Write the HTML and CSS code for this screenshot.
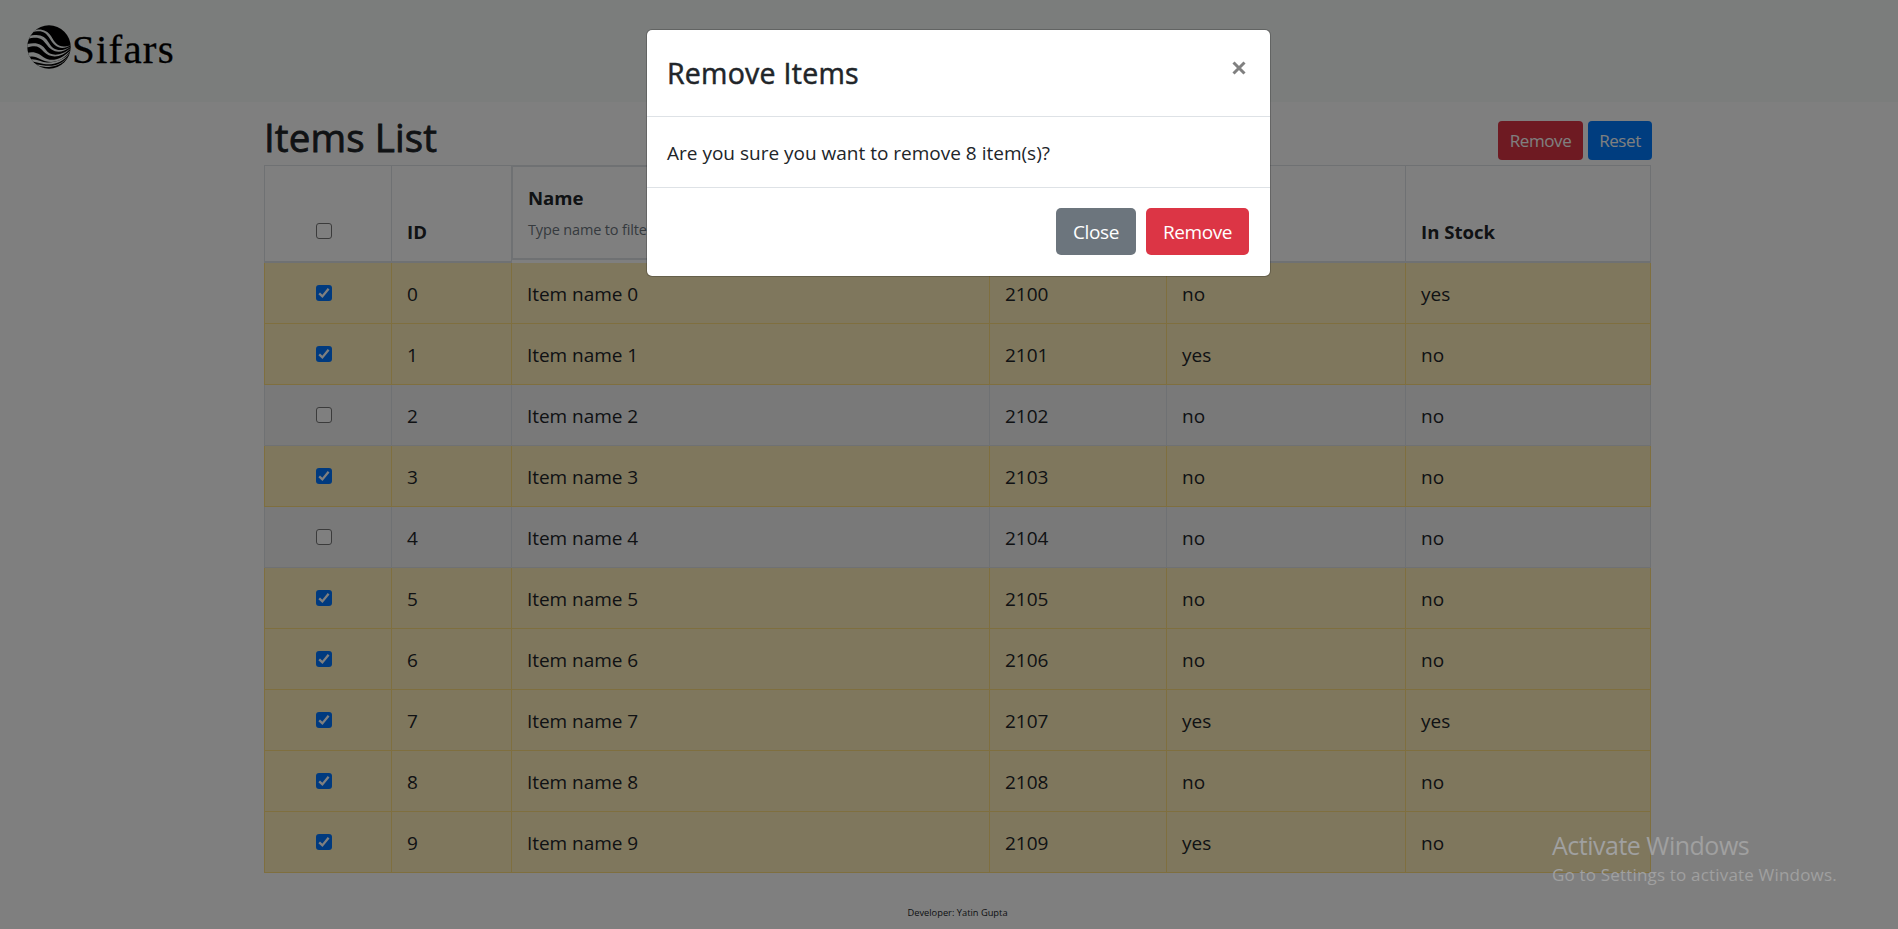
FILE: index.html
```html
<!DOCTYPE html>
<html lang="en"><head><meta charset="utf-8"><title>Items List</title><link rel="stylesheet" href="styles.css"></head>
<body>
<header class="navbar">
<svg class="mark" viewBox="0 0 44 44"><defs><clipPath id="disc"><circle cx="22" cy="22" r="21.7"/></clipPath></defs><g clip-path="url(#disc)"><rect width="44" height="44"/><g class="stripes"><path d="M4 5.5C14 3 20 5 24 11C29 20 33 24 44 20C34 26 28 22 23 14C18 6 14 5 4 7.5Z"/><path d="M1 11.5C12 8 18 11 22 18C26 25 33 28 44 21.5C33 30 25 27 20 20C15 13 11 11 0 14Z"/><path d="M0 19C10 17 15 19 19 25C23 31 33 32 44 23C34 34 23 33 17 27C12 21 9 20 0 22.5Z"/><path d="M0 28C8 26 12 29 17 32.5C24 37 34 35 44 25C35 38 23 39 14 34.5C8 31 6 31 0 32Z"/><path d="M2 34.5C9 33 14 37 20 37.5C29 38 37 34 43 28C35 39 25 40 17 39C12 38 8 36.5 3 36.5Z"/><path d="M6 39.5C14 39 18 41.5 25 40.7C33 39.5 37 36 41 32C35 40 27 42 19 42C13 41.5 11 40.5 7 41Z"/></g></g></svg><span class="brand">Sifars</span>
</header>
<main class="container">
<div class="heading"><h2>Items List</h2><div class="actions"><button class="btn danger">Remove</button><button class="btn primary">Reset</button></div></div>
<table class="table">
<colgroup><col class="c1"><col class="c2"><col class="c3"><col class="c4"><col class="c5"><col class="c6"></colgroup>
<thead><tr><th class="pick"><i class="check"></i></th><th>ID</th><th class="name"><div class="filter"><b>Name</b><span>Type name to filter...</span></div></th><th></th><th></th><th>In Stock</th></tr></thead>
<tbody id="rows"></tbody>
</table>
<footer class="credit">Developer: Yatin Gupta</footer>
</main>
<div class="backdrop"></div>
<section class="modal">
<div class="modal-header"><h4>Remove Items</h4><svg class="close" viewBox="0 0 14 14"><path d="M1.5 1.5L12.5 12.5M12.5 1.5L1.5 12.5"/></svg></div>
<div class="modal-body"><span>Are you sure you want to remove 8 item(s)?</span></div>
<div class="modal-footer"><button class="btn secondary">Close</button><button class="btn danger">Remove</button></div>
</section>
<aside class="watermark"><div class="wm-title">Activate Windows</div><div class="wm-text">Go to Settings to activate Windows.</div></aside>
<script src="app.js"></script>
</body></html>
```
FILE: app.js
```javascript
const items = [['no','yes'],['yes','no'],['no','no'],['no','no'],['no','no'],['no','no'],['no','no'],['yes','yes'],['no','no'],['yes','no']];
const tick = '<svg viewBox="0 0 16 16"><path d="M3.2 8.3L6.4 11.4L12.6 3.8"/></svg>';
document.getElementById('rows').innerHTML = items.map(([sale, stock], i) => {
  const on = i !== 2 && i !== 4;
  return `<tr class="${on ? 'selected' : 'plain'}"><td class="pick"><i class="check ${on ? 'on' : ''}">${on ? tick : ''}</i></td><td>${i}</td><td class="item">Item name ${i}</td><td>${2100 + i}</td><td>${sale}</td><td>${stock}</td></tr>`;
}).join('');
```
FILE: styles.css
```css
* { box-sizing: border-box; }
body { margin: 0; height: 929px; overflow: hidden; background: #fff; color: #212529; font: 19px/30px "Open Sans", sans-serif; }
.navbar { height: 102px; background: #f6faf8; display: flex; padding: 25px 27px; color: #000; }
.mark { width: 44px; height: 44px; flex: none; }
.stripes { fill: #f6faf8; }
.brand { font: 41px/48px "Liberation Serif", serif; letter-spacing: 1.2px; margin-left: 1px; -webkit-text-stroke: .3px #000; }
.container { width: 1387px; margin: 12px 0 0 264px; }
.heading { height: 51px; display: flex; justify-content: space-between; }
h2 { margin: 0; font-size: 38.5px; line-height: 47px; font-weight: 500; letter-spacing: .1px; -webkit-text-stroke: .8px #212529; }
.actions { display: flex; gap: 5px; margin: 7px -1px 0 0; }
.btn { height: 47px; border: 0; border-radius: 5px; color: #fff; font: 19px/30px "Open Sans", sans-serif; padding: 0; white-space: nowrap; letter-spacing: -.4px; }
.actions .btn { height: 39px; font-size: 17px; border-radius: 4px; }
.actions .danger { width: 85px; }
.actions .primary { width: 64px; }
.danger { background: #dc3545; }
.primary { background: #007bff; }
.secondary { background: #6c757d; }
.table { width: 1386px; border-collapse: collapse; table-layout: fixed; }
.c1 { width: 127px; } .c2 { width: 120px; } .c3 { width: 478px; } .c4 { width: 177px; } .c5 { width: 239px; } .c6 { width: 245px; }
th, td { border: 1px solid #dee2e6; padding: 16px 15px 14px; text-align: left; }
td { height: 61px; }
th { height: 96px; vertical-align: bottom; border-bottom-width: 2px; font-weight: 700; font-size: 18.6px; }
.name { padding: 0; vertical-align: top; border-bottom-color: #fff; }
.filter { height: 94px; border: 2px solid #dee2e6; border-width: 1px 1px 2px; padding: 16px 15px 0; display: flex; flex-direction: column; }
.filter b { font-weight: 700; }
.filter span { font-size: 14.5px; font-weight: 400; color: #6c757d; line-height: 33px; letter-spacing: -.15px; }
.pick { text-align: center; padding: 15px 23px 15px 15px; }
.check { display: inline-block; width: 16px; height: 16px; border: 1px solid #767676; border-radius: 3px; background: #fff; vertical-align: -1px; }
.check.on { background: #0075ff; border: 0; }
.check svg { display: block; fill: none; stroke: #fff; stroke-width: 2.3; }
.plain td { background: #f2f2f2; }
.selected td { background: #ffeeba; border-color: #ffdf7e; }
.item { letter-spacing: -.05px; }
.credit { font-size: 9.3px; line-height: 14px; text-align: center; margin-top: 33px; }
.backdrop { position: absolute; inset: 0; background: rgba(0,0,0,.5); }
.modal { position: absolute; left: 646px; top: 29px; width: 625px; height: 248px; background: #fff; border: 1px solid rgba(0,0,0,.2); background-clip: padding-box; border-radius: 6px; }
.modal-header { height: 87px; border-bottom: 1px solid #dee2e6; padding: 21px 24px 20px 20px; display: flex; justify-content: space-between; }
h4 { margin: 0; font-size: 28.5px; line-height: 45px; font-weight: 500; letter-spacing: .25px; -webkit-text-stroke: .5px #212529; }
.close { width: 14px; height: 14px; margin-top: 10px; fill: none; stroke: #808080; stroke-width: 3; }
.modal-body { height: 70px; padding: 21px 20px 19px; }
.modal-footer { border-top: 1px solid #dee2e6; padding: 20px 21px 20px 20px; display: flex; justify-content: flex-end; gap: 10px; }
.modal-footer .secondary { width: 80px; }
.modal-footer .danger { width: 103px; }
.watermark { position: absolute; left: 1552px; top: 829px; color: #a0a0a0; white-space: nowrap; }
.wm-title { font-size: 25px; line-height: 32px; letter-spacing: -.5px; }
.wm-text { font-size: 17px; line-height: 28px; letter-spacing: .18px; }
```
